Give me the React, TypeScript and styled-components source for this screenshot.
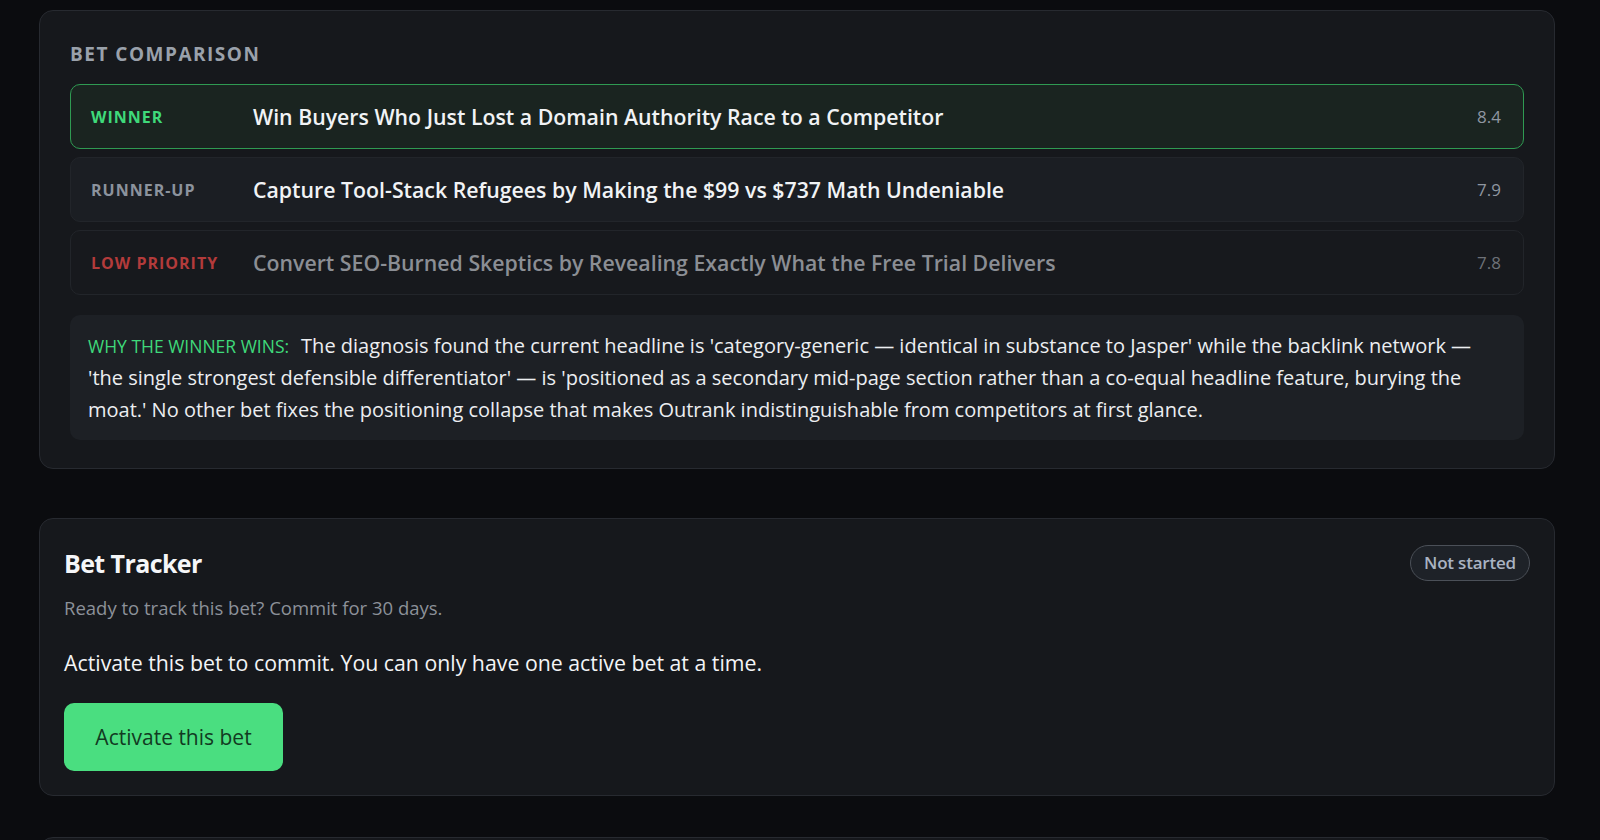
import React from "react";
import styled, { createGlobalStyle } from "styled-components";

const Global = createGlobalStyle`
  html, body { margin: 0; padding: 0; background: #0b0c0f; }
  body { font-family: "Open Sans", "Noto Sans", sans-serif; color: #e8eaed; }
  * { box-sizing: border-box; }
`;

const Page = styled.div`
  display: flex;
  flex-direction: column;
  padding: 10px 45px 0 39px;
  height: 840px;
  overflow: hidden;
`;

const Card = styled.section<{ $pad: string; $top?: number }>`
  background: #16181c;
  border: 1px solid #272a30;
  border-radius: 14px;
  padding: ${(p) => p.$pad};
  margin-top: ${(p) => p.$top ?? 0}px;
  flex-shrink: 0;
`;

const SectionLabel = styled.div`
  font-size: 19px;
  font-weight: 700;
  letter-spacing: 1.5px;
  color: #9aa1ab;
  text-transform: uppercase;
  margin: 0 0 17px 0;
  line-height: 26px;
`;

const Rows = styled.div`
  display: flex;
  flex-direction: column;
  gap: 8px;
`;

type Kind = "winner" | "runner" | "low";

const Row = styled.div<{ $kind: Kind }>`
  display: flex;
  align-items: center;
  height: 65px;
  padding: 0 22px 0 20px;
  border-radius: 10px;
  border: 1px solid ${(p) => (p.$kind === "winner" ? "#2f9a52" : "#22252a")};
  background: ${(p) => (p.$kind === "winner" ? "#1a2420" : p.$kind === "runner" ? "#1b1e23" : "#17191d")};
`;

const RowLabel = styled.div<{ $kind: Kind }>`
  width: 162px;
  flex-shrink: 0;
  font-size: 16px;
  font-weight: 700;
  letter-spacing: 1px;
  color: ${(p) => (p.$kind === "winner" ? "#3fd97a" : p.$kind === "runner" ? "#8c939d" : "#b33b3b")};
`;

const Headline = styled.div<{ $kind: Kind }>`
  flex: 1;
  font-size: 21.3px;
  font-weight: 600;
  color: ${(p) => (p.$kind === "low" ? "#8b8e94" : "#f1f3f5")};
`;

const Score = styled.div<{ $kind: Kind }>`
  font-size: 17px;
  color: ${(p) => (p.$kind === "low" ? "#6d7178" : "#8f96a0")};
`;

const Why = styled.div`
  margin-top: 20px;
  height: 125px;
  background: #1d2025;
  border-radius: 10px;
  padding: 15px 18px 16px 18px;
  font-size: 20px;
  line-height: 32px;
  color: #eceef1;
`;

const WhyLabel = styled.span`
  display: inline-block;
  color: #3fd97a;
  font-size: 17.5px;
  line-height: 24px;
  text-transform: uppercase;
  margin-right: 12px;
`;

const TrackerHead = styled.div`
  display: flex;
  justify-content: space-between;
  align-items: center;
  margin-top: 2px;
`;

const Title = styled.h2`
  margin: 0;
  font-size: 25px;
  font-weight: 700;
  letter-spacing: -0.6px;
  color: #f5f6f8;
  line-height: 34px;
`;

const Pill = styled.div`
  border: 1.5px solid #4b5058;
  background: #1e2228;
  border-radius: 999px;
  padding: 6px 13px 6px;
  font-size: 17px;
  font-weight: 600;
  letter-spacing: -0.2px;
  color: #a9b3c2;
  line-height: 22px;
`;

const Sub = styled.p`
  margin: 14px 0 0;
  font-size: 18.5px;
  color: #8c9199;
  line-height: 26px;
`;

const Note = styled.p`
  margin: 27px 0 0;
  font-size: 21.3px;
  color: #f3f4f6;
  line-height: 30px;
`;

const Button = styled.button`
  display: block;
  margin-top: 25px;
  width: 219px;
  height: 68px;
  border: none;
  border-radius: 10px;
  background: #4ade80;
  color: #123a22;
  font-family: "Open Sans", "Noto Sans", sans-serif;
  font-size: 21px;
  cursor: pointer;
`;

const rows: { kind: Kind; label: string; text: string; score: string }[] = [
  { kind: "winner", label: "Winner", text: "Win Buyers Who Just Lost a Domain Authority Race to a Competitor", score: "8.4" },
  { kind: "runner", label: "Runner-up", text: "Capture Tool-Stack Refugees by Making the $99 vs $737 Math Undeniable", score: "7.9" },
  { kind: "low", label: "Low priority", text: "Convert SEO-Burned Skeptics by Revealing Exactly What the Free Trial Delivers", score: "7.8" },
];

export default function App() {
  return (
    <>
      <Global />
      <Page>
        <Card $pad="30px 30px 28px">
          <SectionLabel>Bet Comparison</SectionLabel>
          <Rows>
            {rows.map((r) => (
              <Row key={r.kind} $kind={r.kind}>
                <RowLabel $kind={r.kind}>{r.label.toUpperCase()}</RowLabel>
                <Headline $kind={r.kind}>{r.text}</Headline>
                <Score $kind={r.kind}>{r.score}</Score>
              </Row>
            ))}
          </Rows>
          <Why>
            <WhyLabel>Why the winner wins:</WhyLabel>
            The diagnosis found the current headline is 'category-generic — identical in substance to Jasper' while the backlink network — 'the single strongest defensible differentiator' — is 'positioned as a secondary mid-page section rather than a co-equal headline feature, burying the moat.' No other bet fixes the positioning collapse that makes Outrank indistinguishable from competitors at first glance.
          </Why>
        </Card>
        <Card $pad="24px" $top={49}>
          <TrackerHead>
            <Title>Bet Tracker</Title>
            <Pill>Not started</Pill>
          </TrackerHead>
          <Sub>Ready to track this bet? Commit for 30 days.</Sub>
          <Note>Activate this bet to commit. You can only have one active bet at a time.</Note>
          <Button>Activate this bet</Button>
        </Card>
        <Card $pad="24px" $top={41}>
          <Title>&nbsp;</Title>
        </Card>
      </Page>
    </>
  );
}
